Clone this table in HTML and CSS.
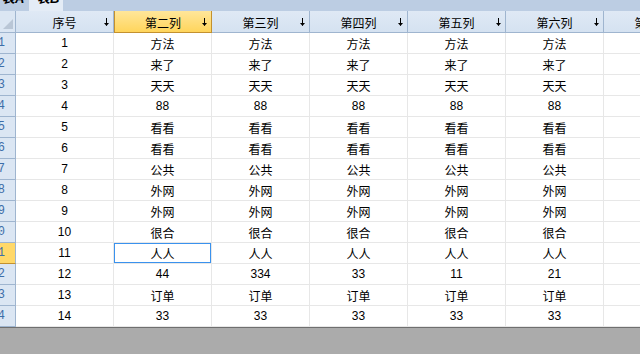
FILE: index.html
```html
<!DOCTYPE html>
<html lang="zh">
    <head>
        <meta charset="utf-8">
        <title>表B</title>
        <link rel="stylesheet" href="styles.css">
    </head>
    <body>
        <div class="tabs">
            <div class="tab"><span>表A</span></div>
            <div class="tab active"><span>表B</span></div>
        </div>
        <div class="sheet" id="sheet">
            <div class="corner"><div class="tri"></div></div>
        </div>
        <div class="footer"></div>
        <script>
            var heads = ["序号", "第二列", "第三列", "第四列", "第五列", "第六列", "第七列"];
            var rows = [
                ["方法"], ["来了"], ["天天"], ["88"], ["看看"], ["看看"], ["公共"],
                ["外网"], ["外网"], ["很合"], ["人人"],
                ["44", "334", "33", "11", "21"],
                ["订单"], ["33"]
            ];
            var arrow = '<svg class="arrow" width="5" height="8" viewBox="0 0 5 8">'
                      + '<path d="M2.5 0V7.5" stroke="#000" stroke-width="1" fill="none"/>'
                      + '<path d="M0 5H5L2.5 8Z" fill="#000"/></svg>';
            var sheet = document.getElementById("sheet");
            var html = "";
            for (var h = 0; h < heads.length; h++) {
                html += '<div class="colhead' + (h === 1 ? ' sel' : '') + '">' + heads[h] + arrow + '</div>';
            }
            for (var r = 0; r < rows.length; r++) {
                var n = r + 1;
                html += '<div class="rowhead' + (n === 11 ? ' sel' : '') + '"><span>' + n + '</span></div>';
                html += '<div class="cell">' + n + '</div>';
                for (var c = 0; c < 5; c++) {
                    var v = rows[r].length > 1 ? rows[r][c] : rows[r][0];
                    var cls = (n === 11 && c === 0) ? "cell current" : "cell";
                    html += '<div class="' + cls + '">' + v + '</div>';
                }
                html += '<div class="cell"></div>';
            }
            sheet.insertAdjacentHTML("beforeend", html);
        </script>
    </body>
</html>
```

FILE: styles.css
```css
*{
    box-sizing: border-box;
}
html, body{
    margin: 0;
    padding: 0;
    width: 640px;
    height: 354px;
    overflow: hidden;
    background: #ffffff;
    font-family: "Liberation Sans", "Noto Sans CJK SC", sans-serif;
    font-size: 12px;
    color: #000;
}
.tabs{
    display: flex;
    height: 11px;
    background: #bccde3;
    overflow: hidden;
}
.tab{
    width: 29px;
    height: 11px;
    overflow: hidden;
    padding-left: 2px;
    font-weight: bold;
    font-style: italic;
    font-size: 13px;
    line-height: 13px;
}
.tab span{
    display: block;
    margin-top: -8px;
}
.tab.active{
    width: 34px;
    padding-left: 8px;
    background: #e4ecf6;
}
.sheet{
    display: grid;
    grid-template-columns: 16px repeat(7, 98px);
    grid-template-rows: 22px repeat(14, 21px);
    width: 640px;
    overflow: hidden;
}
.corner{
    background: #dbe6f3;
    border-right: 1px solid #9fb5cf;
    border-bottom: 1px solid #9fb5cf;
    display: flex;
    align-items: flex-end;
    justify-content: flex-end;
    padding: 0 2px 3px 0;
}
.tri{
    width: 0;
    height: 0;
    border-left: 10px solid transparent;
    border-bottom: 10px solid #b9c6d6;
}
.colhead{
    display: flex;
    align-items: center;
    justify-content: center;
    position: relative;
    background: linear-gradient(#dfe9f5, #d5e2f1);
    border-right: 1px solid #9fb5cf;
    border-bottom: 1px solid #9fb5cf;
    white-space: nowrap;
    padding-top: 1px;
}
.arrow{
    position: absolute;
    right: 4px;
    top: 7px;
}
.colhead.sel{
    background: linear-gradient(#ffe69a, #ffd55c);
    border-color: #c3912f;
    border-left: 1px solid #c3912f;
}
.rowhead{
    display: flex;
    align-items: center;
    justify-content: flex-end;
    padding-right: 10px;
    overflow: hidden;
    background: #dbe6f3;
    border-right: 1px solid #9fb5cf;
    border-bottom: 1px solid #9fb5cf;
    color: #3d6ea9;
    font-family: "Liberation Mono", monospace;
    font-size: 12px;
}
.rowhead.sel{
    background: #ffd869;
    border-bottom-color: #c3912f;
}
.cell{
    display: flex;
    align-items: center;
    justify-content: center;
    border-right: 1px solid #e7e7e7;
    border-bottom: 1px solid #e7e7e7;
    white-space: nowrap;
}
.cell.current{
    box-shadow: inset 0 0 0 1px #3a92ee;
}
.footer{
    height: 27px;
    background: #ababab;
    border-top: 1px solid #6f6f6f;
}
```
